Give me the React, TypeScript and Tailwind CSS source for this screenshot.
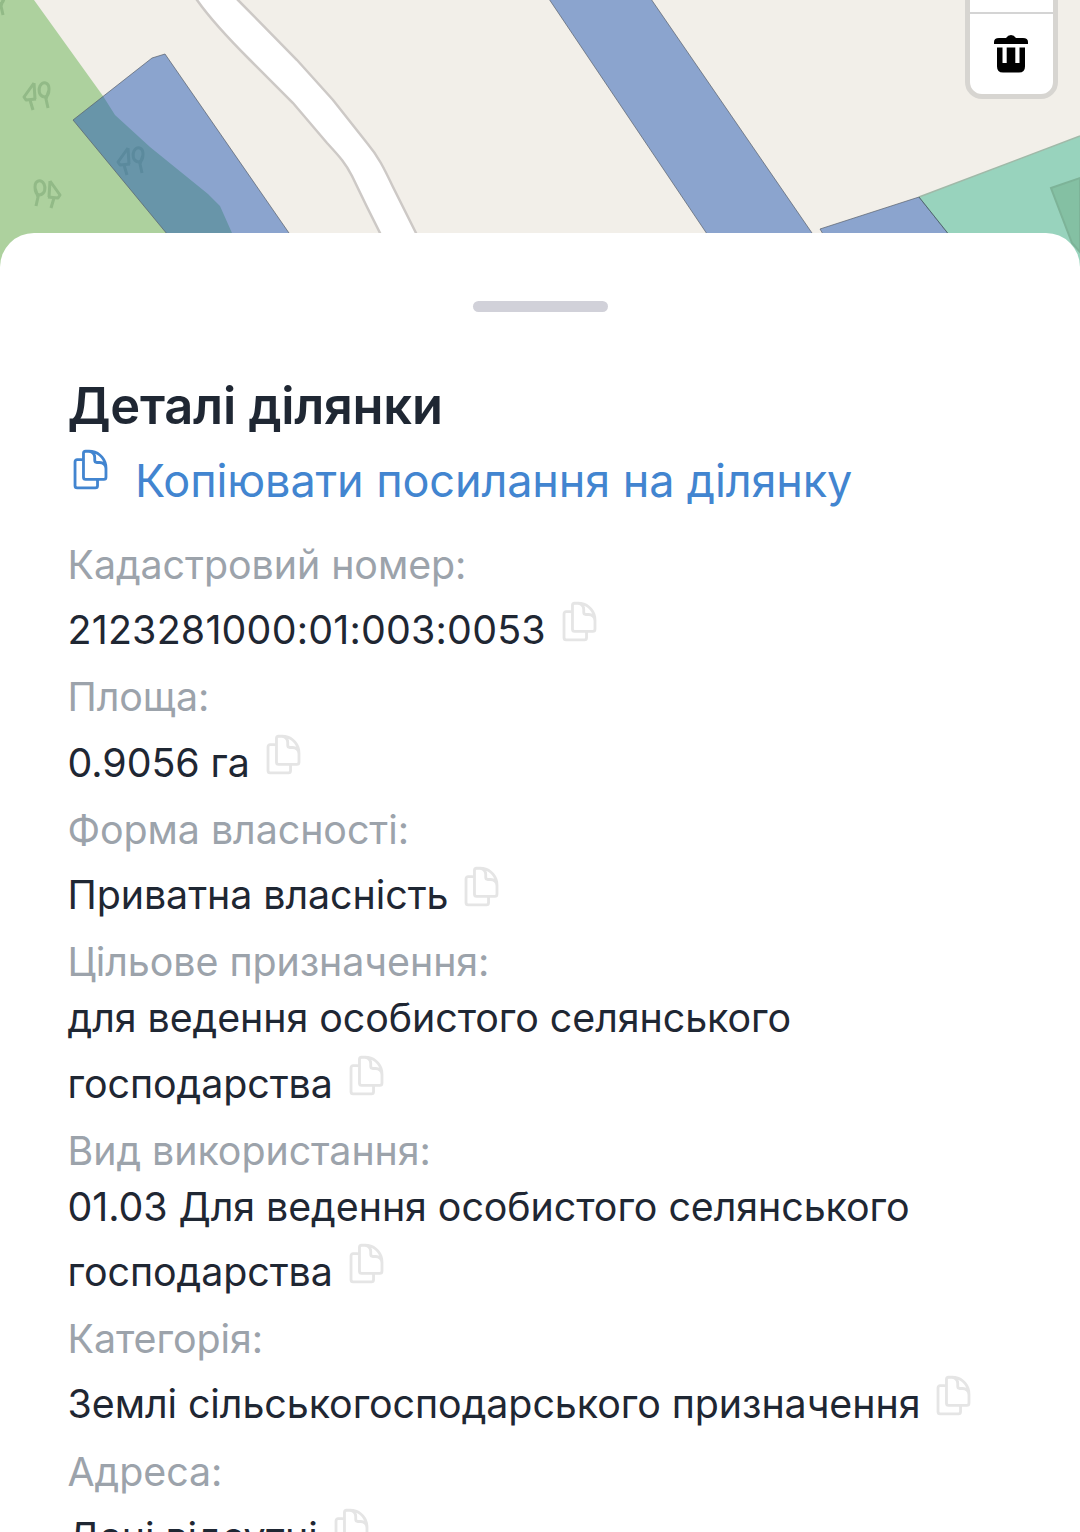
import { HiOutlineDocumentDuplicate } from 'react-icons/hi2'

const details = [
  { label: 'Кадастровий номер:', value: '2123281000:01:003:0053', numeric: true },
  { label: 'Площа:', value: '0.9056 га' },
  { label: 'Форма власності:', value: 'Приватна власність' },
  { label: 'Цільове призначення:', value: 'для ведення особистого селянського господарства' },
  { label: 'Вид використання:', value: '01.03 Для ведення особистого селянського господарства' },
  { label: 'Категорія:', value: 'Землі сільськогосподарського призначення' },
  { label: 'Адреса:', value: 'Дані відсутні' },
]

function TreeMark({ x, y, flip = false }: { x: number; y: number; flip?: boolean }) {
  return (
    <g
      transform={`translate(${x} ${y}) scale(${flip ? -1 : 1} 1)`}
      fill="none"
      stroke="#4d7d4b"
      strokeOpacity="0.28"
      strokeWidth="3"
      strokeLinejoin="round"
    >
      <path d="M-3 -12 L-13 2 L-11 5 L-1 4 M-3 -12 L-2 4 M-7 5 L-4 15" />
      <path d="M7 2 C2 1 1 -5 3 -9 C6 -14 12 -13 12 -6 C12 -1 10 2 7 2 M12 -5 L9 4 L11 13" />
    </g>
  )
}

function MapView() {
  return (
    <svg className="block h-full w-full" viewBox="0 0 1080 280">
      <rect width="1080" height="280" fill="#f2efe9" />

      {/* Forest */}
      <path d="M0 0 H34 L103 96 L115 115 L150 147 L208 194 L220 206 L232 233 L245 280 H0 Z" fill="#add19e" />
      <TreeMark x={37} y={95} />
      <TreeMark x={131} y={160} />
      <TreeMark x={47} y={193} flip />
      <TreeMark x={-8} y={2} />

      {/* Road */}
      <path
        d="M189 -10 L197 0 C211 20 228 38 250 60 L293 103 L327 143 C340 157 346 164 352 176 L367 207 L381 235 L400 280 H438 L416 233 L393 187 C384 168 378 156 367 143 L333 100 L297 60 L238 0 L228 -10 Z"
        fill="#fff"
        stroke="#cdc9c6"
        strokeWidth="2.5"
      />

      {/* Parcels */}
      <g fill="#2459b3" fillOpacity="0.5" stroke="#59606b" strokeOpacity="0.7" strokeWidth="1">
        <path d="M73 120 L152 58 L165 54 L289 233 L322 280 H205 Z" />
        <path d="M549 -1 H651 L812 233 L840 280 H738 Z" />
        <path d="M820 229 L919 197 L985 280 H850 Z" />
      </g>
      <path d="M919 197 L1080 136 V280 H985 Z" fill="#98d3bd" />
      <path d="M919 197 L1080 136" stroke="#a0b9a8" strokeWidth="1.5" />
      <path d="M919 197 L985 280" stroke="#4f6672" strokeWidth="1" />
      <path d="M1051 188 L1080 178 V252 L1072 243 Z" fill="#84c0a3" stroke="#7db398" strokeWidth="2" />
    </svg>
  )
}

function TrashIcon() {
  return (
    <svg className="h-[38px] w-[34px]" viewBox="0 0 34 38">
      <path d="M0 9 V7 Q0 3 5 3 H12 Q14 0 17 0 Q20 0 22 3 H29 Q34 3 34 7 V9 Z" />
      <path
        fillRule="evenodd"
        d="M3 12.5 H31 V31.5 Q31 37.5 25 37.5 H9 Q3 37.5 3 31.5 Z M8.5 12.5 V28 H12.7 V12.5 Z M21.3 12.5 V28 H25.5 V12.5 Z"
      />
    </svg>
  )
}

export default function App() {
  return (
    <div className="relative h-[1532px] w-[1080px] overflow-hidden bg-white font-['Inter',sans-serif] text-[#1f2733]">
      {/* Map */}
      <div className="h-[280px]">
        <MapView />
      </div>

      {/* Map toolbar */}
      <div className="absolute -top-10 right-[22.5px] h-[138.5px] w-[93px] rounded-[17px] border-[5px] border-[#d7d5d1] bg-white">
        <div className="h-[49px] border-b-2 border-[#d4d4d4]" />
        <button className="flex h-[80px] w-full items-center justify-center text-black">
          <TrashIcon />
        </button>
      </div>

      {/* Bottom sheet */}
      <div className="relative -mt-[47px] rounded-t-[34px] bg-white px-[67.5px] pt-[68px]">
        <div className="mx-auto h-[11px] w-[135px] rounded-full bg-[#d1d1d9]" />

        <h2 className="mt-[54px] mb-[2px] text-[50.6px] leading-[79px] font-semibold tracking-[-0.26px]">
          Деталі ділянки
        </h2>
        <button className="flex items-start gap-[22.5px] text-[45px] leading-[67.5px] tracking-[-0.12px] text-[#4285d0]">
          <HiOutlineDocumentDuplicate className="size-[45px]" />
          <span>Копіювати посилання на ділянку</span>
        </button>

        <dl className="mt-[22.5px] text-[39.375px] leading-[56.25px] tracking-[-0.06px]">
          {details.map((item) => (
            <div key={item.label}>
              <dt className="text-[#9ca3ab]">{item.label}</dt>
              <dd className={item.numeric ? 'tracking-[0.2px]' : ''}>
                {item.value}{' '}
                <button className="inline-flex h-[76.1px] items-start pt-[6px] text-[#e5e5e5]">
                  <HiOutlineDocumentDuplicate className="size-[45px]" />
                </button>
              </dd>
            </div>
          ))}
        </dl>
      </div>
    </div>
  )
}
